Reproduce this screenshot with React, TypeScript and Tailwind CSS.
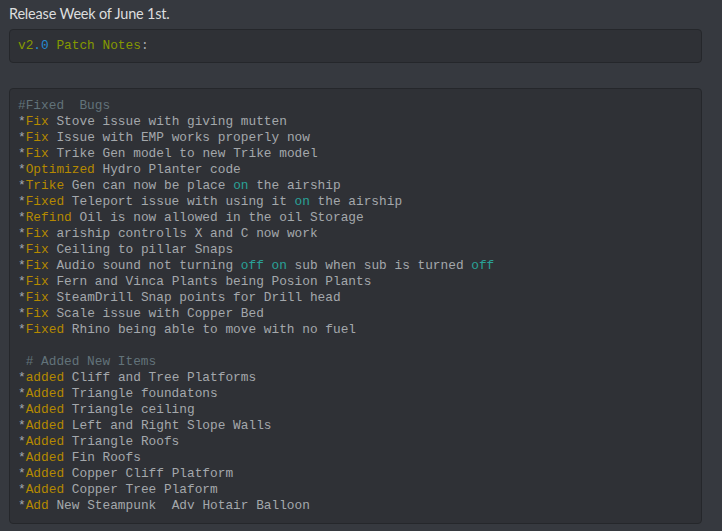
import React from 'react';

const mono = { fontFamily: '"Liberation Mono", "DejaVu Sans Mono", monospace' };

const patchLines: string[] = [
    '#Fixed  Bugs',
    '*Fix Stove issue with giving mutten',
    '*Fix Issue with EMP works properly now',
    '*Fix Trike Gen model to new Trike model',
    '*Optimized Hydro Planter code',
    '*Trike Gen can now be place on the airship',
    '*Fixed Teleport issue with using it on the airship',
    '*Refind Oil is now allowed in the oil Storage',
    '*Fix ariship controlls X and C now work',
    '*Fix Ceiling to pillar Snaps',
    '*Fix Audio sound not turning off on sub when sub is turned off',
    '*Fix Fern and Vinca Plants being Posion Plants',
    '*Fix SteamDrill Snap points for Drill head',
    '*Fix Scale issue with Copper Bed',
    '*Fixed Rhino being able to move with no fuel',
    '',
    ' # Added New Items',
    '*added Cliff and Tree Platforms',
    '*Added Triangle foundatons',
    '*Added Triangle ceiling',
    '*Added Left and Right Slope Walls',
    '*Added Triangle Roofs',
    '*Added Fin Roofs',
    '*Added Copper Cliff Platform',
    '*Added Copper Tree Plaform',
    '*Add New Steampunk  Adv Hotair Balloon',
];

// rough highlight: comment lines, first word after * is a keyword, on/off are literals
function CodeLine({ line }: { line: string }): React.ReactElement {
    if (line.trim().startsWith('#')) {
        return <div className="text-[#62737a]">{line || ' '}</div>;
    }
    if (!line.startsWith('*')) {
        return <div>{line || ' '}</div>;
    }
    const rest = line.slice(1);
    const firstSpace = rest.indexOf(' ');
    const keyword = rest.slice(0, firstSpace);
    const tail = rest.slice(firstSpace);
    const parts = tail.split(/(\s+)/);
    return (
        <div>
            *<span className="text-[#b58900]">{keyword}</span>
            {parts.map((p, i) =>
                p === 'on' || p === 'off' ? (
                    <span key={i} className="text-[#2aa198]">{p}</span>
                ) : (
                    <span key={i}>{p}</span>
                )
            )}
        </div>
    );
}

export default function App(): React.ReactElement {
    return (
        <div
            className="w-full h-[531px] overflow-hidden bg-[#36393f] pl-[9px] pr-[20px] pt-[3px]"
            style={{ fontFamily: 'Lato, "Noto Sans", sans-serif' }}
        >
            <div className="text-[14.5px] leading-[22px] tracking-[-0.2px] text-[#dcddde]">Release Week of June 1st.</div>

            <pre
                className="mt-[4px] rounded-[4px] border border-[#25272b] bg-[#2f3136] px-[8px] pt-[8px] pb-[8px] text-[12.8px] leading-[16px] text-[#a4a8ac] whitespace-pre"
                style={mono}
            >
                <span className="text-[#859900]">v2</span>
                <span className="text-[#268bd2]">.0</span>
                <span className="text-[#859900]"> Patch Notes</span>:
            </pre>

            <pre
                className="mt-[25px] rounded-[4px] border border-[#25272b] bg-[#2f3136] px-[8px] pt-[9px] pb-[9px] text-[12.8px] leading-[16px] text-[#a4a8ac] whitespace-pre"
                style={mono}
            >
                {patchLines.map((l, i) => (
                    <CodeLine key={i} line={l} />
                ))}
            </pre>

            <div className="mt-[5px] text-[15px] leading-[22px] text-[#dcddde]">Added Features</div>
        </div>
    );
}
